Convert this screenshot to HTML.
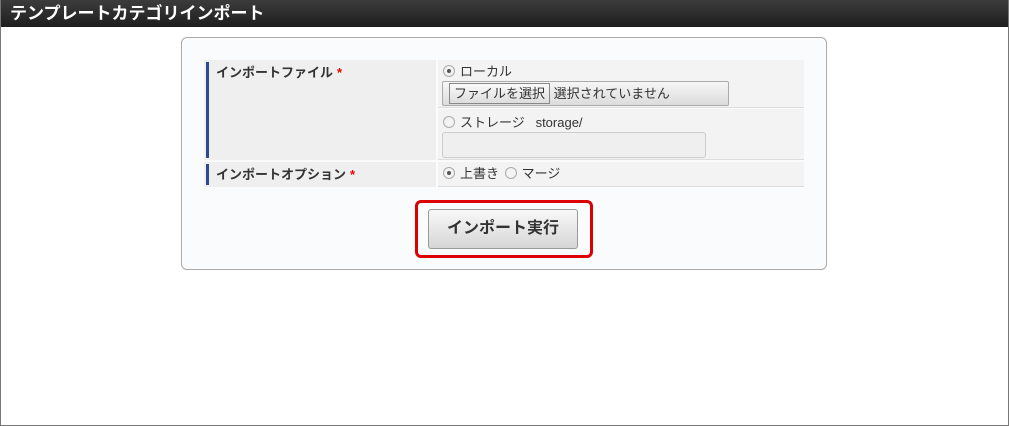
<!DOCTYPE html>
<html><head><meta charset="utf-8"><style>
*{margin:0;padding:0;box-sizing:border-box}
body{width:1009px;height:426px;overflow:hidden;background:#fff;font-family:"Liberation Sans","Noto Sans CJK JP",sans-serif;font-size:13px;color:#333;position:relative}
.frame{position:absolute;left:0;top:0;width:1009px;height:426px;border:1px solid #777;border-top:none}
.hdr{position:absolute;left:0;top:0;width:1009px;height:27px;background:linear-gradient(#3c3c3c,#1e1e1e);color:#fff;font-weight:bold;font-size:17px;line-height:27px;padding-left:10px}
.panel{position:absolute;left:181px;top:37px;width:646px;height:233px;border:1px solid #aaa;border-radius:6px;background:#fafbfd}
.abs{position:absolute}
.lab{background:#efefef;font-weight:bold;font-size:13px;padding-left:12px}
.lab:before{content:"";position:absolute;left:2px;top:2px;bottom:2px;width:3px;background:#2e4a8c}
.star{color:#e00;margin-left:4px}
.val{background:#f3f3f3;border-bottom:1px solid #ddd}
.rad{display:inline-block;width:12px;height:12px;border:1px solid #aaa;border-radius:50%;background:#f3f3f3;vertical-align:-1px;margin-right:5px;position:relative}
.rad.on:after{content:"";position:absolute;left:3px;top:3px;width:4px;height:4px;border-radius:50%;background:#555}
</style></head><body>
<div class="hdr">テンプレートカテゴリインポート</div>
<div class="frame"></div>
<div class="panel"></div>
<div class="abs lab" style="left:204px;top:60px;width:232px;height:100px;line-height:25px">インポートファイル<span class="star">*</span></div>
<div class="abs val" style="left:438px;top:60px;width:366px;height:48px"></div>
<div class="abs val" style="left:438px;top:109px;width:366px;height:51px"></div>
<div class="abs lab" style="left:204px;top:162px;width:232px;height:25px;line-height:25px">インポートオプション<span class="star">*</span></div>
<div class="abs val" style="left:438px;top:162px;width:366px;height:25px"></div>
<div class="abs" style="left:443px;top:64px;line-height:16px"><span class="rad on"></span>ローカル</div>
<div class="abs" style="left:442px;top:81px;width:287px;height:25px;border:1px solid #aaa;border-radius:2px;background:linear-gradient(#f6f6f6,#dcdcdc);font-size:13px;line-height:23px">
<span style="display:inline-block;margin:1px 0 0 6px;padding:0 4px;height:21px;line-height:19px;border:1px solid #888;background:linear-gradient(#fafafa,#ddd)">ファイルを選択</span> 選択されていません</div>
<div class="abs" style="left:443px;top:115px;line-height:16px"><span class="rad"></span>ストレージ&nbsp;&nbsp; storage/</div>
<div class="abs" style="left:442px;top:132px;width:264px;height:26px;border:1px solid #ccc;border-radius:3px;background:#efefef"></div>
<div class="abs" style="left:443px;top:166px;line-height:16px"><span class="rad on"></span>上書き <span class="rad" style="margin-left:2px"></span>マージ</div>
<div class="abs" style="left:415px;top:200px;width:178px;height:58px;border:3px solid #d00;border-radius:6px"></div>
<div class="abs" style="left:428px;top:209px;width:150px;height:40px;border:1px solid #999;border-radius:3px;background:linear-gradient(#f8f8f8,#d6d6d6);font-weight:bold;font-size:16px;text-align:center;line-height:38px;color:#333">インポート実行</div>
</body></html>
